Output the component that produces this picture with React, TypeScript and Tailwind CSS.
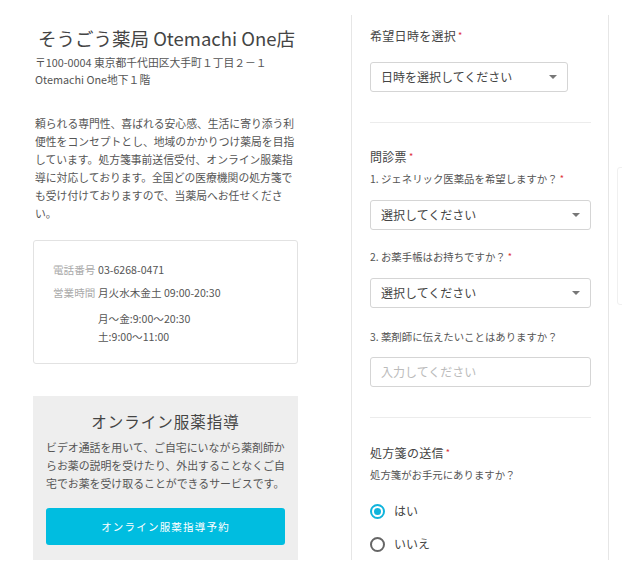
const font = { fontFamily: '"Noto Sans CJK JP", "Noto Sans", sans-serif' }

function Req() {
  return <span className="text-[#e0303a] text-[9px] align-top ml-[2px]">*</span>
}

function SelectBox({ label, width }: { label: string; width: string }) {
  return (
    <div className={`${width} h-[30px] border border-[#d5d5d5] rounded-[3px] flex items-center justify-between pl-[10px] pr-[10px] bg-white`}>
      <span className="text-[12px] text-[#444]">{label}</span>
      <svg width="8" height="4" viewBox="0 0 8 4"><path d="M0 0h8L4 4z" fill="#777" /></svg>
    </div>
  )
}

function Radio({ checked, label }: { checked?: boolean; label: string }) {
  return (
    <div className="flex items-center gap-[9px] h-[20px]">
      {checked ? (
        <span className="w-[15px] h-[15px] rounded-full border-2 border-[#10b4dc] flex items-center justify-center">
          <span className="w-[7px] h-[7px] rounded-full bg-[#10b4dc]" />
        </span>
      ) : (
        <span className="w-[15px] h-[15px] rounded-full border-2 border-[#666]" />
      )}
      <span className="text-[12px] text-[#444]">{label}</span>
    </div>
  )
}

export default function App() {
  return (
    <div className="relative w-[622px] h-[579px] bg-white overflow-hidden text-[#444]" style={font}>
      <div className="flex">
        {/* left column */}
        <div className="w-[265px] ml-[33px] flex flex-col">
          <h1 className="mt-[23px] pl-[5px] text-[18.5px] leading-[30px] text-[#444] whitespace-nowrap">
            そうごう薬局 Otemachi One店
          </h1>
          <p className="mt-[1px] pl-[2px] text-[10.8px] leading-[17px] text-[#555]">
            〒100-0004 東京都千代田区大手町１丁目２－１<br />Otemachi One地下１階
          </p>
          <p className="mt-[26px] pl-[2px] text-[10.8px] leading-[18px] text-[#555]">
            頼られる専門性、喜ばれる安心感、生活に寄り添う利便性をコンセプトとし、地域のかかりつけ薬局を目指しています。処方箋事前送信受付、オンライン服薬指導に対応しております。全国どの医療機関の処方箋でも受け付けておりますので、当薬局へお任せください。
          </p>

          <div className="mt-[18px] h-[124px] border border-[#e2e2e2] rounded-[3px] pt-[20px] pl-[19px] text-[10.6px] text-[#555]">
            <div className="flex leading-[18px] whitespace-nowrap">
              <span className="text-[#aaa] w-[45px]">電話番号</span>
              <span>03-6268-0471</span>
            </div>
            <div className="flex leading-[18px] mt-[5px] whitespace-nowrap">
              <span className="text-[#aaa] w-[45px]">営業時間</span>
              <span>月火水木金土 09:00-20:30</span>
            </div>
            <div className="pl-[45px] mt-[8px] leading-[18px]">
              <div>月～金:9:00～20:30</div>
              <div>土:9:00～11:00</div>
            </div>
          </div>

          <div className="mt-[32px] h-[164px] bg-[#eeeeee] px-[13px] pt-[12px]">
            <h2 className="text-center text-[15.5px] leading-[26px] tracking-[1px] text-[#444]">オンライン服薬指導</h2>
            <p className="mt-[4px] text-[10.9px] leading-[18px] text-[#555]">
              ビデオ通話を用いて、ご自宅にいながら薬剤師からお薬の説明を受けたり、外出することなくご自宅でお薬を受け取ることができるサービスです。
            </p>
            <button className="mt-[16px] w-full h-[37px] bg-[#00bde0] rounded-[3px] text-white text-[10.5px] tracking-[1.2px]">
              オンライン服薬指導予約
            </button>
          </div>
        </div>

        {/* right card */}
        <div className="ml-[53px] mt-[15px] w-[258px] h-[545px] border-x border-[#e6e6e6] pl-[18px] pr-[17px] text-[#444]">
          <div className="mt-[12px] text-[12px] leading-[18px] tracking-[0.3px]">希望日時を選択<Req /></div>
          <div className="mt-[17px]"><SelectBox label="日時を選択してください" width="w-[198px]" /></div>
          <div className="mt-[30px] border-t border-[#ececec]" />

          <div className="mt-[25px] text-[12px] leading-[18px] tracking-[0.3px]">問診票<Req /></div>
          <div className="mt-[5px] text-[10.4px] leading-[16px] text-[#555]">1. ジェネリック医薬品を希望しますか？<Req /></div>
          <div className="mt-[13px]"><SelectBox label="選択してください" width="w-full" /></div>
          <div className="mt-[19px] text-[10.4px] leading-[16px] text-[#555]">2. お薬手帳はお持ちですか？<Req /></div>
          <div className="mt-[13px]"><SelectBox label="選択してください" width="w-full" /></div>
          <div className="mt-[21px] text-[10.4px] leading-[16px] text-[#555]">3. 薬剤師に伝えたいことはありますか？</div>
          <div className="mt-[12px] h-[30px] border border-[#d5d5d5] rounded-[3px] flex items-center pl-[10px]">
            <span className="text-[12px] text-[#bbb]">入力してください</span>
          </div>
          <div className="mt-[30px] border-t border-[#ececec]" />

          <div className="mt-[26px] text-[12px] leading-[18px] tracking-[0.3px]">処方箋の送信<Req /></div>
          <div className="mt-[5px] text-[10.4px] leading-[16px] text-[#555]">処方箋がお手元にありますか？</div>
          <div className="mt-[18px] flex flex-col gap-[13px]">
            <Radio checked label="はい" />
            <Radio label="いいえ" />
          </div>
        </div>
      </div>

      {/* edge of a sticky panel peeking in at the right */}
      <div className="absolute left-[617px] top-[167px] w-[10px] h-[138px] border border-[#f0f0f0] rounded-[3px]" />
    </div>
  )
}
